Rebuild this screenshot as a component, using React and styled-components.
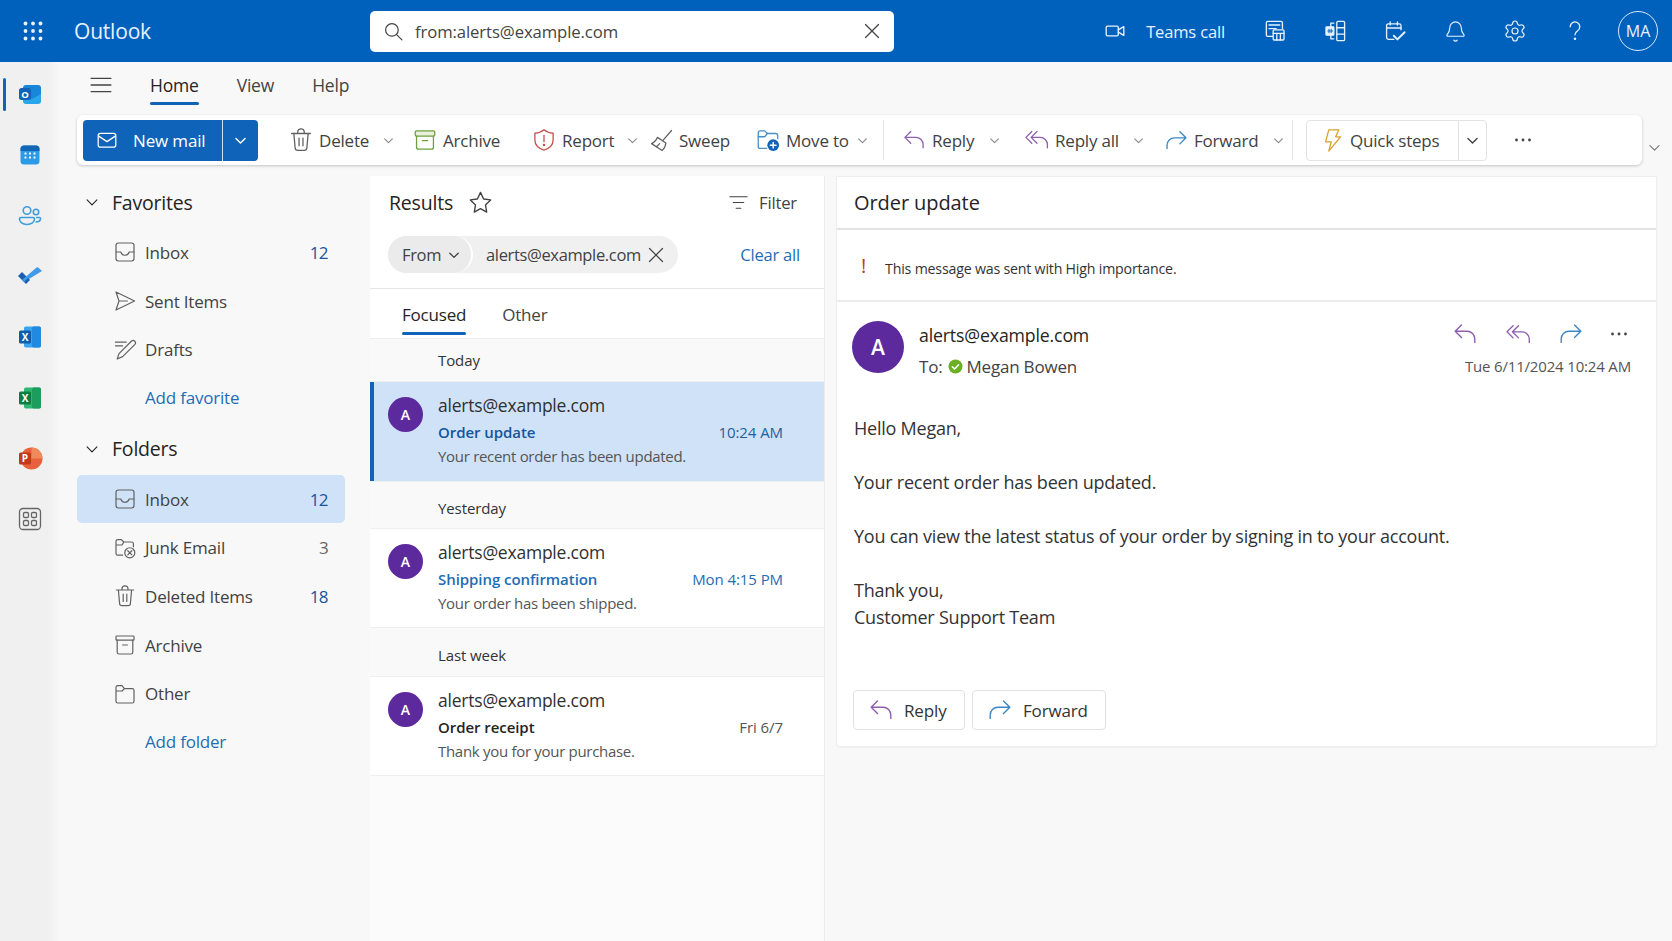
import styled, { createGlobalStyle } from 'styled-components';
import { Settings, Bell } from 'lucide-react';

const blue = '#0f63b8';
const ink = '#242424';
const linkBlue = '#1f6db5';

const GlobalStyle = createGlobalStyle`
  html, body { margin: 0; padding: 0; background: #f8f8f8; }
  body { font-family: 'Open Sans', 'Noto Sans', sans-serif; color: ${ink}; }
  * { box-sizing: border-box; }
`;

const Page = styled.div`
  width: 1672px;
  height: 941px;
  overflow: hidden;
  display: flex;
  flex-direction: column;
`;

const TopBar = styled.header`
  height: 62px;
  flex-shrink: 0;
  background: #0061bd;
  display: flex;
  align-items: center;
  color: #e6f3ff;
  padding-right: 14px;
`;

const Waffle = styled.div`
  width: 66px;
  display: flex;
  justify-content: center;
`;

const Brand = styled.div`
  font-size: 21px;
  font-weight: 500;
  margin-left: 8px;
  width: 296px;
  letter-spacing: -0.2px;
`;

const SearchBox = styled.div`
  width: 524px;
  height: 41px;
  background: #fff;
  border-radius: 5px;
  display: flex;
  align-items: center;
  padding: 0 12px 0 13px;
  color: #444;
  gap: 11px;
`;

const SearchText = styled.span`
  flex: 1;
  font-size: 16.7px;
  letter-spacing: -0.1px;
`;

const TeamsCall = styled.div`
  margin-left: auto;
  display: flex;
  align-items: center;
  gap: 20px;
  font-size: 16.5px;
  margin-right: 20px;
  letter-spacing: -0.15px;
`;

const HeaderBtn = styled.div`
  width: 60px;
  display: flex;
  justify-content: center;
`;

const Persona = styled.div`
  width: 40px;
  height: 40px;
  margin-left: 13px;
  border: 1.5px solid #d7eaff;
  border-radius: 50%;
  display: flex;
  align-items: center;
  justify-content: center;
  font-size: 16px;
`;

const Body = styled.div`
  flex: 1;
  display: flex;
  min-height: 0;
`;

const Rail = styled.nav`
  width: 60px;
  flex-shrink: 0;
  padding-top: 2px;
  background: linear-gradient(90deg, #f0f0f0 80%, #f8f8f8);
`;

const RailItem = styled.div`
  height: 60.7px;
  display: flex;
  align-items: center;
  justify-content: center;
  position: relative;
  &::before {
    content: '';
    display: ${p => (p.$active ? 'block' : 'none')};
    position: absolute;
    left: 3px;
    top: 14px;
    bottom: 14px;
    width: 2.5px;
    border-radius: 2px;
    background: ${blue};
  }
`;

const Main = styled.main`
  flex: 1;
  min-width: 0;
  display: flex;
  flex-direction: column;
`;

const RibbonTabs = styled.div`
  height: 53px;
  display: flex;
  align-items: center;
  padding: 0 0 8px 30px;
  gap: 38px;
`;

const Burger = styled.div`
  width: 22px;
  color: #444;
  display: flex;
`;

const RibbonTab = styled.div`
  font-size: 17.5px;
  letter-spacing: -0.2px;
  color: ${p => (p.$active ? ink : '#444')};
  position: relative;
  &::after {
    content: '';
    display: ${p => (p.$active ? 'block' : 'none')};
    position: absolute;
    left: 0;
    right: 0;
    bottom: -8px;
    height: 3px;
    border-radius: 2px;
    background: ${blue};
  }
`;

const ToolbarRow = styled.div`
  display: flex;
  align-items: flex-start;
  padding-left: 17px;
  height: 50px;
`;

const Toolbar = styled.div`
  width: 1565px;
  height: 50px;
  background: #fff;
  border-radius: 6px;
  box-shadow: 0 1px 3px rgba(0, 0, 0, 0.22);
  display: flex;
  align-items: center;
  padding-left: 6px;
`;

const CollapseChevron = styled.div`
  margin: 26px 0 0 6px;
  color: #777;
  display: flex;
`;

const NewMail = styled.div`
  width: 175px;
  height: 41px;
  display: flex;
  background: ${blue};
  color: #fff;
  border-radius: 4px;
  margin-right: 33px;
  font-size: 17px;
`;

const NewMailMain = styled.div`
  width: 140px;
  display: flex;
  align-items: center;
  padding-left: 13px;
  gap: 15px;
  letter-spacing: -0.15px;
  border-right: 1px solid #cfe3f7;
`;

const NewMailMenu = styled.div`
  flex: 1;
  display: flex;
  align-items: center;
  justify-content: center;
`;

const ToolButton = styled.div`
  width: ${p => p.$width}px;
  flex-shrink: 0;
  display: flex;
  align-items: center;
  gap: 8px;
  font-size: 17px;
  letter-spacing: -0.2px;
  color: #424242;
`;

const IconSlot = styled.span`
  width: ${p => p.$slot || 20}px;
  flex-shrink: 0;
  display: flex;
  justify-content: center;
  color: ${p => p.$color || '#616161'};
  & > svg {
    flex-shrink: 0;
  }
`;

const ToolChevron = styled.span`
  display: flex;
  color: #888;
  margin-left: ${p => p.$offset}px;
`;

const ToolDivider = styled.div`
  width: 1px;
  height: 40px;
  background: #e6e6e6;
  margin-right: ${p => p.$after}px;
`;

const QuickSteps = styled.div`
  width: 181px;
  height: 41px;
  display: flex;
  border: 1px solid #e3e3e3;
  border-radius: 4px;
  font-size: 17px;
  letter-spacing: -0.2px;
  color: #424242;
`;

const QuickMain = styled.div`
  width: 152px;
  display: flex;
  align-items: center;
  padding-left: 15px;
  gap: 7px;
  border-right: 1px solid #e3e3e3;
`;

const QuickMenu = styled.div`
  flex: 1;
  display: flex;
  align-items: center;
  justify-content: center;
  color: #424242;
`;

const MoreButton = styled.div`
  margin-left: 27px;
  display: flex;
  color: #424242;
`;

const Panes = styled.div`
  flex: 1;
  min-height: 0;
  margin-top: 11px;
  display: flex;
  align-items: flex-start;
`;

const Sidebar = styled.aside`
  width: 310px;
  flex-shrink: 0;
  padding: 0 25px 0 17px;
`;

const SectionHead = styled.div`
  height: 52px;
  display: flex;
  align-items: center;
  font-size: 19.5px;
  font-weight: 500;
  letter-spacing: -0.2px;
  padding-left: 8px;
  gap: 13px;
  color: ${ink};
`;

const FolderRow = styled.div`
  height: 48.7px;
  display: flex;
  align-items: center;
  padding: 0 17px 0 36px;
  gap: 8px;
  font-size: 17px;
  letter-spacing: -0.2px;
  color: #424242;
  border-radius: 5px;
  background: ${p => (p.$active ? '#cfe2f7' : 'transparent')};
  font-weight: ${p => (p.$active ? 500 : 400)};
`;

const FolderName = styled.span`
  flex: 1;
`;

const Count = styled.span`
  color: ${p => (p.$muted ? '#666' : '#15559c')};
  font-weight: ${p => (p.$muted ? 400 : 500)};
  letter-spacing: -0.6px;
`;

const AddLink = styled.div`
  height: 48.7px;
  display: flex;
  align-items: center;
  padding: 0 0 2px 68px;
  font-size: 17px;
  letter-spacing: -0.2px;
  color: ${linkBlue};
`;

const ListPane = styled.section`
  width: 455px;
  height: 765px;
  flex-shrink: 0;
  background: #fbfbfb;
  border-right: 1px solid #ececec;
`;

const ListHead = styled.div`
  height: 113px;
  background: #fff;
  border-bottom: 1px solid #e6e6e6;
  padding: 0 24px 0 18px;
`;

const ResultsRow = styled.div`
  height: 52px;
  display: flex;
  align-items: center;
  padding-left: 1px;
  gap: 14px;
`;

const ResultsTitle = styled.span`
  font-size: 19.5px;
  font-weight: 500;
  letter-spacing: -0.2px;
`;

const FilterBtn = styled.div`
  margin-left: auto;
  display: flex;
  align-items: center;
  gap: 9px;
  font-size: 16.7px;
  letter-spacing: -0.2px;
  color: #424242;
  margin-right: 3px;
`;

const ChipRow = styled.div`
  height: 37px;
  margin-top: 8px;
  display: flex;
  align-items: center;
`;

const Chips = styled.div`
  width: 290px;
  height: 37px;
  background: #f0f0f0;
  border-radius: 19px;
  display: flex;
  align-items: center;
  font-size: 16.5px;
  letter-spacing: -0.35px;
  color: #424242;
`;

const FromChip = styled.div`
  width: 85px;
  height: 37px;
  border-radius: 19px;
  background: #ebebeb;
  border-right: 2px solid #fff;
  display: flex;
  align-items: center;
  padding-left: 14px;
  gap: 7px;
`;

const ValueChip = styled.div`
  display: flex;
  align-items: center;
  padding-left: 13px;
  gap: 5px;
`;

const ClearAll = styled.div`
  margin-left: auto;
  font-size: 16.5px;
  font-weight: 500;
  letter-spacing: -0.2px;
  color: ${linkBlue};
`;

const ListTabs = styled.div`
  height: 50px;
  background: #fff;
  border-bottom: 1px solid #eee;
  display: flex;
  align-items: center;
  padding: 2px 0 0 32px;
  gap: 36px;
`;

const ListTab = styled.div`
  font-size: 17px;
  letter-spacing: -0.2px;
  font-weight: ${p => (p.$active ? 500 : 400)};
  color: ${p => (p.$active ? ink : '#444')};
  position: relative;
  &::after {
    content: '';
    display: ${p => (p.$active ? 'block' : 'none')};
    position: absolute;
    left: 0;
    right: 0;
    bottom: -9px;
    height: 3px;
    border-radius: 2px;
    background: ${blue};
  }
`;

const GroupLabel = styled.div`
  height: ${p => p.$height}px;
  background: #f9f9f9;
  border-bottom: 1px solid #f0f0f0;
  display: flex;
  align-items: center;
  padding: ${p => p.$offset}px 0 0 68px;
  font-size: 15px;
  font-weight: 500;
  letter-spacing: -0.1px;
  color: #333;
`;

const MailItem = styled.div`
  height: ${p => p.$height}px;
  display: flex;
  padding: 15px 41px 0 18px;
  gap: 15px;
  position: relative;
  background: ${p => (p.$selected ? '#cfe2f7' : '#fff')};
  border-bottom: 1px solid #efefef;
  &::before {
    content: '';
    display: ${p => (p.$selected ? 'block' : 'none')};
    position: absolute;
    left: 0;
    top: 0;
    bottom: 0;
    width: 4px;
    background: ${blue};
  }
`;

const Avatar = styled.div`
  width: ${p => p.$size}px;
  height: ${p => p.$size}px;
  flex-shrink: 0;
  border-radius: 50%;
  background: #5c2a9d;
  color: #fff;
  display: flex;
  align-items: center;
  justify-content: center;
  font-size: ${p => p.$font}px;
  font-weight: 600;
`;

const MailText = styled.div`
  flex: 1;
  min-width: 0;
`;

const MailFrom = styled.div`
  font-size: 17.5px;
  line-height: 23px;
  letter-spacing: -0.22px;
  color: #303030;
  margin-top: -3px;
`;

const MailSubjectRow = styled.div`
  display: flex;
  justify-content: space-between;
  font-size: 15px;
  line-height: 25px;
  margin-top: 3px;
`;

const MailSubject = styled.span`
  font-weight: 600;
  letter-spacing: -0.06px;
  color: ${p => p.$color};
`;

const MailTime = styled.span`
  color: ${p => p.$color};
  letter-spacing: -0.08px;
`;

const MailPreview = styled.div`
  font-size: 15px;
  line-height: 25px;
  margin-top: -1px;
  letter-spacing: -0.3px;
  color: #555;
`;

const ReadingPane = styled.section`
  width: 821px;
  margin-left: 11px;
  height: 571px;
  background: #fff;
  border: 1px solid #eeeeee;
  border-radius: 0 0 4px 4px;
  box-shadow: 0 1px 2px rgba(0, 0, 0, 0.04);
`;

const SubjectBar = styled.div`
  height: 53px;
  border-bottom: 2px solid #e2e2e2;
  display: flex;
  align-items: center;
  padding-left: 17px;
  font-size: 20px;
  font-weight: 500;
  letter-spacing: -0.08px;
`;

const Importance = styled.div`
  height: 72px;
  border-bottom: 2px solid #ececec;
  display: flex;
  align-items: center;
  padding: 6px 0 0 24px;
  gap: 19px;
  font-size: 14.2px;
  letter-spacing: -0.2px;
  color: #333;
`;

const Bang = styled.span`
  color: #c8312a;
  font-size: 20px;
  line-height: 20px;
  margin-top: -4px;
`;

const SenderRow = styled.div`
  display: flex;
  padding: 19px 25px 0 15px;
  gap: 15px;
`;

const SenderText = styled.div`
  flex: 1;
`;

const SenderName = styled.div`
  font-size: 17.7px;
  font-weight: 500;
  line-height: 28px;
  letter-spacing: -0.15px;
`;

const ToLine = styled.div`
  display: flex;
  align-items: center;
  gap: 6px;
  margin-top: 6px;
  font-size: 17px;
  letter-spacing: -0.2px;
  color: #424242;
`;

const Presence = styled.span`
  display: flex;
  margin-right: -3px;
`;

const SenderMeta = styled.div`
  display: flex;
  flex-direction: column;
  align-items: flex-end;
`;

const MessageIcons = styled.div`
  height: 26px;
  display: flex;
  align-items: center;
  gap: 25px;
  padding-right: 3px;
  color: #424242;
`;

const MessageDate = styled.div`
  margin-top: 9px;
  font-size: 15px;
  letter-spacing: -0.17px;
  color: #555;
`;

const MessageBody = styled.div`
  padding: 37px 0 0 17px;
  font-size: 18px;
  line-height: 27px;
  letter-spacing: -0.23px;
  color: #333;
`;

const BodyLine = styled.div`
  margin-top: ${p => (p.$gap ? '27px' : 0)};
`;

const ReplyActions = styled.div`
  display: flex;
  gap: 7px;
  padding: 59px 0 0 16px;
`;

const ReplyButton = styled.div`
  width: ${p => p.$width}px;
  height: 40px;
  border: 1px solid #e2e2e2;
  border-radius: 4px;
  display: flex;
  align-items: center;
  padding-left: 16px;
  gap: 12px;
  font-size: 17px;
  font-weight: 500;
  letter-spacing: -0.15px;
  color: #333;
`;

const Icon = ({ size = 20, stroke = 1, children }) => (
  <svg width={size} height={size} viewBox="0 0 20 20" fill="none" stroke="currentColor" strokeWidth={stroke} strokeLinecap="round" strokeLinejoin="round">
    {children}
  </svg>
);

const Chevron = ({ size = 12, stroke = 1.1 }) => (
  <Icon size={size} stroke={stroke * 20 / size}><path d="M3 7l7 7 7-7" /></Icon>
);

const WaffleIcon = () => (
  <svg width="20" height="20" viewBox="0 0 20 20" fill="currentColor">
    {[2.5, 10, 17.5].flatMap(y => [2.5, 10, 17.5].map(x => <circle key={`${x}-${y}`} cx={x} cy={y} r="1.9" />))}
  </svg>
);

const SearchIcon = () => <Icon size={21} stroke={1.15}><circle cx="8.5" cy="8.5" r="6" /><path d="M13 13l5 5" /></Icon>;
const CloseIcon = ({ size = 20, stroke = 1.3 }) => <Icon size={size} stroke={stroke}><path d="M3.5 3.5l13 13M16.5 3.5l-13 13" /></Icon>;
const CameraIcon = () => <Icon size={22} stroke={1.2}><rect x="2" y="5.5" width="11" height="9" rx="1.3" /><path d="M13 9l5-3v8l-5-3" /></Icon>;
const BoardIcon = () => <Icon size={24} stroke={1.1}><path d="M8 14.5H4a1.2 1.2 0 0 1-1.2-1.2V3.2A1.2 1.2 0 0 1 4 2h11a1.2 1.2 0 0 1 1.2 1.2V8" /><path d="M5 5h9M5 8h6" /><rect x="8.5" y="9" width="9" height="8.5" rx=".8" /><path d="M8.5 12h9M11.5 12v5.5M14.5 12v5.5" /></Icon>;
const PanelsIcon = () => <Icon size={24} stroke={1.1}><rect x="11.5" y="2" width="6.5" height="16" rx="1" /><path d="M11.5 7.3H18M11.5 12.6H18M9 3.5H6.5V6M6.5 14v2.5H9" /><rect x="2.5" y="6.5" width="6.5" height="7" rx=".6" fill="currentColor" /><path d="M5 8.5v3M6.8 8.5v3M4 10h4" stroke="#0061bd" strokeWidth=".8" /></Icon>;
const CalendarCheckIcon = () => <Icon size={24} stroke={1.1}><path d="M9 17H4.5A1.5 1.5 0 0 1 3 15.5v-10A1.5 1.5 0 0 1 4.5 4h9A1.5 1.5 0 0 1 15 5.5V9" /><path d="M3 7.5h12M6 2.5V5M12 2.5V5" /><path d="M9 14l3 3 6-6" strokeWidth="1.6" /></Icon>;
const HelpIcon = () => <Icon size={24} stroke={1.1}><path d="M6 6.5a4 4 0 1 1 6.2 3.300c-1.400.9-2.200 1.700-2.200 3.400" /><circle cx="10" cy="16.5" r=".5" fill="currentColor" /></Icon>;
const MailIcon = () => <Icon size={22} stroke={1.15}><rect x="2" y="4" width="16" height="12.5" rx="2" /><path d="M2.5 6.5l7.5 5 7.5-5" /></Icon>;
const TrashIcon = ({ size = 26 }) => <Icon size={size}><path d="M2.8 5h14.4M7.5 5V4a2.5 2.5 0 0 1 5 0v1M4.5 5l1 11.200A1.900 1.900 0 0 0 7.400 18h5.200a1.900 1.900 0 0 0 1.900-1.800l1-11.200M8.500 8.500v6M11.500 8.500v6" /></Icon>;
const ArchiveIcon = () => <Icon size={26}><rect x="2.5" y="3" width="15" height="4" rx="1" fill="#e6f0da" /><path d="M3.500 7v8.500A1.500 1.500 0 0 0 5 17h10a1.500 1.500 0 0 0 1.500-1.500V7M8 10.500h4" /></Icon>;
const ShieldIcon = () => <Icon size={26}><path d="M10 2.200c2 1.700 4.200 2.500 7 2.600v5.200c0 3.800-2.400 6.300-7 7.800-4.600-1.500-7-4-7-7.800V4.800c2.800-.1 5-.9 7-2.600z" /><path d="M10 6.500v4.800" /><circle cx="10" cy="13.8" r=".5" fill="currentColor" /></Icon>;
const BroomIcon = () => <Icon size={25}><path d="M18 2l-6.500 7.500M6.800 7.500l6.700 4.500c-.3 2.500-1.200 4.500-3 6L2 12.500c2-.8 3.800-2.800 4.800-5z" /><path d="M6 15l2.500-2.500" /></Icon>;
const FolderPlusIcon = () => (
  <Icon size={26}>
    <path d="M9 16.500H4A1.500 1.500 0 0 1 2.500 15V4.500A1.500 1.500 0 0 1 4 3h3.500l2 2H16a1.500 1.500 0 0 1 1.500 1.500V9" stroke="#4b8fc7" />
    <path d="M2.500 7.500h5l2-2.500" stroke="#4b8fc7" />
    <circle cx="14" cy="14" r="4.5" fill="#0f63b8" stroke="none" />
    <path d="M14 11.800v4.400M11.800 14h4.400" stroke="#fff" strokeWidth="1.1" />
  </Icon>
);
const ReplyIcon = ({ size = 26 }) => <Icon size={size}><path d="M7.500 3.500L3 8l4.500 4.500M3 8h8.500a5.500 5.500 0 0 1 5.500 5.500V16" /></Icon>;
const ReplyAllIcon = ({ size = 26 }) => <Icon size={size}><path d="M6 3.500L1.500 8 6 12.500M10 3.500L5.500 8l4.500 4.500M5.500 8h7a5.500 5.500 0 0 1 5.500 5.500V16" /></Icon>;
const ForwardIcon = ({ size = 27 }) => <Icon size={size}><path d="M12.500 3.500L17 8l-4.500 4.500M17 8H8.500A5.500 5.500 0 0 0 3 13.500V16" /></Icon>;
const BoltIcon = () => <Icon size={25}><path d="M7 1.500h8l-2.500 5.500h4L7 18.500 9 11H4.500z" /></Icon>;
const DotsIcon = () => (
  <svg width="18" height="4" viewBox="0 0 18 4" fill="currentColor"><circle cx="2.5" cy="2" r="1.4" /><circle cx="9" cy="2" r="1.4" /><circle cx="15.5" cy="2" r="1.4" /></svg>
);
const InboxIcon = () => <Icon size={24}><rect x="2.5" y="2.5" width="15" height="15" rx="2" /><path d="M2.500 10h4c.5 1.600 2 2.700 3.500 2.700s3-1.100 3.500-2.700h4" /></Icon>;
const SendIcon = () => <Icon size={24}><path d="M2.500 2.500L18 10 2.500 17.500 5 10zM5 10h7" /></Icon>;
const DraftsIcon = () => <Icon size={24}><path d="M2 3.500h9M2 6.500h6M15.500 2.500a2 2 0 0 1 2.800 2.800L8 15.500l-4.500 2 1.500-4.500z" /></Icon>;
const FolderXIcon = () => <Icon size={24}><path d="M8 16H4a1.500 1.500 0 0 1-1.500-1.500V4.500A1.500 1.500 0 0 1 4 3h3l2 2h6.500A1.500 1.500 0 0 1 17 6.500V9M2.500 7.500h5L9 5" /><circle cx="14" cy="14" r="4.2" /><path d="M12.300 12.300l3.400 3.400M15.700 12.300l-3.400 3.400" /></Icon>;
const BoxIcon = () => <Icon size={24}><rect x="2.5" y="2.5" width="15" height="3.5" rx=".6" /><path d="M3.500 6v10A1.500 1.500 0 0 0 5 17.500h10a1.500 1.500 0 0 0 1.500-1.500V6M8 10h4" /></Icon>;
const FolderIcon = () => <Icon size={24}><path d="M2.500 4.500A1.500 1.500 0 0 1 4 3h3.500l2 2.500H16A1.500 1.500 0 0 1 17.500 7v9a1.500 1.500 0 0 1-1.500 1.500H4A1.500 1.500 0 0 1 2.500 16zM2.500 7.500h5l2-2" /></Icon>;
const StarIcon = () => <Icon size={27}><path d="M10 2.500l2.300 4.900 5.200.7-3.800 3.700.9 5.300L10 14.500l-4.600 2.600.9-5.300L2.500 8.100l5.200-.7z" /></Icon>;
const FilterIcon = () => <Icon size={23}><path d="M2.500 5h15M5.500 10h9M8 15h4" /></Icon>;

const OutlookLogo = () => (
  <svg width="24" height="24" viewBox="0 0 24 24">
    <rect x="5" y="3" width="18" height="18" rx="3" fill="#1a86d9" />
    <path d="M5 12l9 5 9-5v7a3 3 0 0 1-3 3H8a3 3 0 0 1-3-3z" fill="#28a8ea" />
    <rect x="1" y="6" width="12" height="12" rx="2.5" fill="#0f63b8" />
    <text x="7" y="15.500" fontSize="9.5" fontWeight="700" fill="#fff" textAnchor="middle" fontFamily="Open Sans, sans-serif">O</text>
  </svg>
);
const CalendarLogo = () => (
  <svg width="22" height="22" viewBox="0 0 22 22">
    <rect x="1.5" y="1.5" width="19" height="19" rx="3.5" fill="#2b9be8" />
    <path d="M1.500 5a3.500 3.500 0 0 1 3.500-3.500h12A3.500 3.500 0 0 1 20.500 5v2h-19z" fill="#1266b5" />
    {[9.5, 13.5].flatMap(y => [6.5, 11, 15.5].map(x => <rect key={`${x}-${y}`} x={x - 1} y={y - 1} width="2" height="2" rx=".5" fill="#fff" />))}
  </svg>
);
const PeopleLogo = () => (
  <svg width="24" height="24" viewBox="0 0 24 24" fill="none" stroke="#3e9ddc" strokeWidth="1.6">
    <circle cx="9" cy="6.5" r="3.8" />
    <circle cx="18" cy="8" r="2.7" />
    <path d="M3 13.500h12a1.500 1.500 0 0 1 1.500 1.500c0 3-3 5.500-7.500 5.500S1.500 18 1.500 15A1.500 1.500 0 0 1 3 13.500z" />
    <path d="M18 13.500h3.500a1 1 0 0 1 1 1c0 2.200-2 3.500-5 3.500" />
  </svg>
);
const TodoLogo = () => (
  <svg width="26" height="22" viewBox="0 0 26 22">
    <path d="M1 11l4-4 6 6-4 4z" fill="#1a5fb4" />
    <path d="M7 17l-2-2L19 3a2 2 0 0 1 2.800 0L25 6z" fill="#3d9be9" />
    <path d="M11 13l-4 4 2 2 4-4z" fill="#1a5fb4" />
  </svg>
);
const TileLogo = ({ base, light, dark, letter }) => (
  <svg width="24" height="24" viewBox="0 0 24 24">
    <rect x="6" y="1.5" width="17" height="21" rx="1.8" fill={light} />
    <rect x="14" y="1.5" width="9" height="21" rx="1.8" fill={base} />
    <rect x="1" y="5.5" width="12" height="13" rx="1.5" fill={dark} />
    <text x="7" y="15.800" fontSize="10" fontWeight="700" fill="#fff" textAnchor="middle" fontFamily="Open Sans, sans-serif">{letter}</text>
  </svg>
);
const PowerPointLogo = () => (
  <svg width="25" height="25" viewBox="0 0 25 25">
    <circle cx="13.5" cy="12.5" r="11" fill="#e8603c" />
    <path d="M13.500 1.500a11 11 0 0 1 11 11h-11z" fill="#f08a5c" />
    <rect x="1" y="6.5" width="12" height="12" rx="1.5" fill="#c13b1b" />
    <text x="7" y="16" fontSize="10" fontWeight="700" fill="#fff" textAnchor="middle" fontFamily="Open Sans, sans-serif">P</text>
  </svg>
);
const AppsLogo = () => (
  <svg width="24" height="24" viewBox="0 0 24 24" fill="none" stroke="#666" strokeWidth="1.3">
    <rect x="1.5" y="1.5" width="21" height="21" rx="3.5" />
    <rect x="5.5" y="5.5" width="5" height="5" rx="1.3" />
    <rect x="13.5" y="5.5" width="5" height="5" rx="1.3" />
    <rect x="5.5" y="13.5" width="5" height="5" rx="1.3" />
    <rect x="13.5" y="13.5" width="5" height="5" rx="1.3" />
  </svg>
);
const PresenceDot = () => (
  <svg width="15" height="15" viewBox="0 0 15 15">
    <circle cx="7.5" cy="7.5" r="7" fill="#6bb024" />
    <path d="M4.300 7.700l2.300 2.300 4-4.300" fill="none" stroke="#fff" strokeWidth="1.5" strokeLinecap="round" strokeLinejoin="round" />
  </svg>
);

const railItems = [
  <OutlookLogo />, <CalendarLogo />, <PeopleLogo />, <TodoLogo />,
  <TileLogo base="#1f8ae0" light="#3aa3ef" dark="#0f5cab" letter="X" />,
  <TileLogo base="#1b9e5c" light="#2fb673" dark="#107c41" letter="X" />,
  <PowerPointLogo />, <AppsLogo />,
];

const tools = [
  { label: 'Delete', icon: <TrashIcon />, color: '#616161', width: 124, chevron: 6 },
  { label: 'Archive', icon: <ArchiveIcon />, color: '#6ca03c', width: 119 },
  { label: 'Report', icon: <ShieldIcon />, color: '#c4524e', width: 117, chevron: 5 },
  { label: 'Sweep', icon: <BroomIcon />, color: '#616161', width: 107 },
  { label: 'Move to', icon: <FolderPlusIcon />, width: 125, chevron: 0 },
];

const replyTools = [
  { label: 'Reply', icon: <ReplyIcon />, color: '#8e5fb0', width: 123, chevron: 7 },
  { label: 'Reply all', icon: <ReplyAllIcon />, color: '#8e5fb0', width: 139, chevron: 6 },
  { label: 'Forward', icon: <ForwardIcon />, color: '#3d86c6', width: 126, chevron: 6 },
];

const favorites = [
  { name: 'Inbox', icon: <InboxIcon />, count: 12 },
  { name: 'Sent Items', icon: <SendIcon /> },
  { name: 'Drafts', icon: <DraftsIcon /> },
];

const folders = [
  { name: 'Inbox', icon: <InboxIcon />, count: 12, active: true },
  { name: 'Junk Email', icon: <FolderXIcon />, count: 3, muted: true },
  { name: 'Deleted Items', icon: <TrashIcon size={24} />, count: 18 },
  { name: 'Archive', icon: <BoxIcon /> },
  { name: 'Other', icon: <FolderIcon /> },
];

const mails = [
  { group: 'Today', groupHeight: 43, offset: 0, height: 100, selected: true, subject: 'Order update', subjectColor: '#15559c', time: '10:24 AM', timeColor: '#1f5f9e', preview: 'Your recent order has been updated.' },
  { group: 'Yesterday', groupHeight: 47, offset: 5, height: 99, subject: 'Shipping confirmation', subjectColor: '#1f6db5', time: 'Mon 4:15 PM', timeColor: '#1f6db5', preview: 'Your order has been shipped.' },
  { group: 'Last week', groupHeight: 49, offset: 5, height: 99, subject: 'Order receipt', subjectColor: '#242424', time: 'Fri 6/7', timeColor: '#555', preview: 'Thank you for your purchase.' },
];

const FolderItem = ({ item }) => (
  <FolderRow $active={item.active}>
    <IconSlot $slot={24}>{item.icon}</IconSlot>
    <FolderName>{item.name}</FolderName>
    {item.count && <Count $muted={item.muted}>{item.count}</Count>}
  </FolderRow>
);

const Tool = ({ tool }) => (
  <ToolButton $width={tool.width}>
    <IconSlot $color={tool.color}>{tool.icon}</IconSlot>
    {tool.label}
    {tool.chevron !== undefined && <ToolChevron $offset={tool.chevron}><Chevron size={11} /></ToolChevron>}
  </ToolButton>
);

const App = () => (
  <Page>
    <GlobalStyle />
    <TopBar>
      <Waffle><WaffleIcon /></Waffle>
      <Brand>Outlook</Brand>
      <SearchBox>
        <SearchIcon />
        <SearchText>from:alerts@example.com</SearchText>
        <CloseIcon />
      </SearchBox>
      <TeamsCall><CameraIcon />Teams call</TeamsCall>
      <HeaderBtn><BoardIcon /></HeaderBtn>
      <HeaderBtn><PanelsIcon /></HeaderBtn>
      <HeaderBtn><CalendarCheckIcon /></HeaderBtn>
      <HeaderBtn><Bell size={23} strokeWidth={1.2} /></HeaderBtn>
      <HeaderBtn><Settings size={24} strokeWidth={1.2} /></HeaderBtn>
      <HeaderBtn><HelpIcon /></HeaderBtn>
      <Persona>MA</Persona>
    </TopBar>
    <Body>
      <Rail>
        {railItems.map((logo, i) => <RailItem key={i} $active={i === 0}>{logo}</RailItem>)}
      </Rail>
      <Main>
        <RibbonTabs>
          <Burger>
            <Icon size={22} stroke={1.15}><path d="M1 4h18M1 10h18M1 16h18" /></Icon>
          </Burger>
          <RibbonTab $active>Home</RibbonTab>
          <RibbonTab>View</RibbonTab>
          <RibbonTab>Help</RibbonTab>
        </RibbonTabs>
        <ToolbarRow>
          <Toolbar>
            <NewMail>
              <NewMailMain><MailIcon />New mail</NewMailMain>
              <NewMailMenu><Chevron size={13} stroke={1.4} /></NewMailMenu>
            </NewMail>
            {tools.map(tool => <Tool key={tool.label} tool={tool} />)}
            <ToolDivider $after={20} />
            {replyTools.map(tool => <Tool key={tool.label} tool={tool} />)}
            <ToolDivider $after={13} />
            <QuickSteps>
              <QuickMain>
                <IconSlot $slot={21} $color="#d8a32e"><BoltIcon /></IconSlot>
                Quick steps
              </QuickMain>
              <QuickMenu><Chevron size={13} stroke={1.4} /></QuickMenu>
            </QuickSteps>
            <MoreButton><DotsIcon /></MoreButton>
          </Toolbar>
          <CollapseChevron><Chevron size={13} /></CollapseChevron>
        </ToolbarRow>
        <Panes>
          <Sidebar>
            <SectionHead><Chevron size={14} />Favorites</SectionHead>
            {favorites.map(item => <FolderItem key={item.name} item={item} />)}
            <AddLink>Add favorite</AddLink>
            <SectionHead><Chevron size={14} />Folders</SectionHead>
            {folders.map(item => <FolderItem key={item.name} item={item} />)}
            <AddLink>Add folder</AddLink>
          </Sidebar>
          <ListPane>
            <ListHead>
              <ResultsRow>
                <ResultsTitle>Results</ResultsTitle>
                <IconSlot $slot={27} $color="#424242"><StarIcon /></IconSlot>
                <FilterBtn><FilterIcon />Filter</FilterBtn>
              </ResultsRow>
              <ChipRow>
                <Chips>
                  <FromChip>From<Chevron size={12} stroke={1.3} /></FromChip>
                  <ValueChip>alerts@example.com<CloseIcon size={20} stroke={1.2} /></ValueChip>
                </Chips>
                <ClearAll>Clear all</ClearAll>
              </ChipRow>
            </ListHead>
            <ListTabs>
              <ListTab $active>Focused</ListTab>
              <ListTab>Other</ListTab>
            </ListTabs>
            {mails.map(mail => (
              <div key={mail.group}>
                <GroupLabel $height={mail.groupHeight} $offset={mail.offset}>{mail.group}</GroupLabel>
                <MailItem $height={mail.height} $selected={mail.selected}>
                  <Avatar $size={35} $font={14}>A</Avatar>
                  <MailText>
                    <MailFrom>alerts@example.com</MailFrom>
                    <MailSubjectRow>
                      <MailSubject $color={mail.subjectColor}>{mail.subject}</MailSubject>
                      <MailTime $color={mail.timeColor}>{mail.time}</MailTime>
                    </MailSubjectRow>
                    <MailPreview>{mail.preview}</MailPreview>
                  </MailText>
                </MailItem>
              </div>
            ))}
          </ListPane>
          <ReadingPane>
            <SubjectBar>Order update</SubjectBar>
            <Importance><Bang>!</Bang>This message was sent with High importance.</Importance>
            <SenderRow>
              <Avatar $size={52} $font={21}>A</Avatar>
              <SenderText>
                <SenderName>alerts@example.com</SenderName>
                <ToLine>To:<Presence><PresenceDot /></Presence>Megan Bowen</ToLine>
              </SenderText>
              <SenderMeta>
                <MessageIcons>
                  <IconSlot $slot={28} $color="#8e5fb0"><ReplyIcon size={28} /></IconSlot>
                  <IconSlot $slot={28} $color="#8e5fb0"><ReplyAllIcon size={27} /></IconSlot>
                  <IconSlot $slot={28} $color="#3d86c6"><ForwardIcon size={28} /></IconSlot>
                  <DotsIcon />
                </MessageIcons>
                <MessageDate>Tue 6/11/2024 10:24 AM</MessageDate>
              </SenderMeta>
            </SenderRow>
            <MessageBody>
              <BodyLine>Hello Megan,</BodyLine>
              <BodyLine $gap>Your recent order has been updated.</BodyLine>
              <BodyLine $gap>You can view the latest status of your order by signing in to your account.</BodyLine>
              <BodyLine $gap>Thank you,</BodyLine>
              <BodyLine>Customer Support Team</BodyLine>
            </MessageBody>
            <ReplyActions>
              <ReplyButton $width={112}><IconSlot $slot={22} $color="#8e5fb0"><ReplyIcon size={28} /></IconSlot>Reply</ReplyButton>
              <ReplyButton $width={134}><IconSlot $slot={22} $color="#3d86c6"><ForwardIcon size={28} /></IconSlot>Forward</ReplyButton>
            </ReplyActions>
          </ReadingPane>
        </Panes>
      </Main>
    </Body>
  </Page>
);

export default App;
